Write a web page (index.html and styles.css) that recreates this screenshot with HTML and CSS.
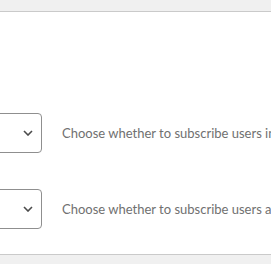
FILE: index.html
```html
<!DOCTYPE html>
<html lang="en">
<head>
    <meta charset="UTF-8">
    <meta name="viewport" content="width=device-width, initial-scale=1.0">
    <title>Subscription settings</title>
    <link rel="stylesheet" href="styles.css">
</head>
<body>
    <div class="top-bar"></div>
    <div class="settings">
        <div class="setting-row">
            <div class="picker">
                <svg class="chevron" width="10" height="6" viewBox="0 0 10 6"><polyline points="1,1 5,5 9,1" fill="none" stroke="#4b4b4b" stroke-width="1.6"/></svg>
            </div>
            <span class="setting-desc">Choose whether to subscribe users in this group</span>
        </div>
        <div class="setting-row">
            <div class="picker">
                <svg class="chevron" width="10" height="6" viewBox="0 0 10 6"><polyline points="1,1 5,5 9,1" fill="none" stroke="#4b4b4b" stroke-width="1.6"/></svg>
            </div>
            <span class="setting-desc">Choose whether to subscribe users automatically</span>
        </div>
    </div>
    <div class="bottom-bar"></div>
</body>
</html>
```

FILE: styles.css
```css
body {
    margin: 0;
    font-family: Lato, "Noto Sans", sans-serif;
    background: #fff;
    overflow: hidden;
}
.top-bar {
    height: 11px;
    background: #f0f0f0;
    border-bottom: 1px solid #cacaca;
}
.settings {
    padding-top: 101px;
    display: flex;
    flex-direction: column;
    gap: 36px;
    height: 141px;
}
.setting-row {
    display: flex;
    align-items: center;
    gap: 20px;
    white-space: nowrap;
}
.picker {
    flex: none;
    box-sizing: border-box;
    margin-left: -22px;
    width: 64px;
    height: 40px;
    border: 1px solid #8f8f8f;
    border-radius: 4px;
    display: flex;
    align-items: center;
    justify-content: flex-end;
    padding-right: 8px;
}
.chevron {
    display: block;
}
.setting-desc {
    font-size: 13px;
    color: #707070;
}
.bottom-bar {
    height: 20px;
    background: #f0f0f0;
    border-top: 1px solid #cacaca;
}
```
